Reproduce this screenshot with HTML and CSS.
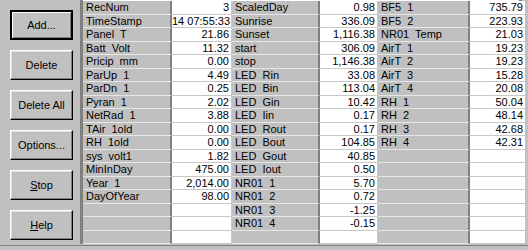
FILE: index.html
```html
<!DOCTYPE html>
<html lang="en">
<head>
    <meta charset="UTF-8">
    <title>Logger Values</title>
    <link rel="stylesheet" href="styles.css">
</head>
<body>
    <div class="window">
        <div class="side">
            <button class="btn default">Add...</button>
            <button class="btn">Delete</button>
            <button class="btn">Delete All</button>
            <button class="btn">Options...</button>
            <button class="btn"><u>S</u>top</button>
            <button class="btn"><u>H</u>elp</button>
        </div>
        <div class="grid">
            <div class="lbl">RecNum</div><div class="val">3</div><div class="lbl">ScaledDay</div><div class="val">0.98</div><div class="lbl">BF5  1</div><div class="val">735.79</div>
            <div class="lbl">TimeStamp</div><div class="val">14 07:55:33</div><div class="lbl">Sunrise</div><div class="val">336.09</div><div class="lbl">BF5  2</div><div class="val">223.93</div>
            <div class="lbl">Panel  T</div><div class="val">21.86</div><div class="lbl">Sunset</div><div class="val">1,116.38</div><div class="lbl">NR01  Temp</div><div class="val">21.03</div>
            <div class="lbl">Batt  Volt</div><div class="val">11.32</div><div class="lbl">start</div><div class="val">306.09</div><div class="lbl">AirT  1</div><div class="val">19.23</div>
            <div class="lbl">Pricip  mm</div><div class="val">0.00</div><div class="lbl">stop</div><div class="val">1,146.38</div><div class="lbl">AirT  2</div><div class="val">19.23</div>
            <div class="lbl">ParUp  1</div><div class="val">4.49</div><div class="lbl">LED  Rin</div><div class="val">33.08</div><div class="lbl">AirT  3</div><div class="val">15.28</div>
            <div class="lbl">ParDn  1</div><div class="val">0.25</div><div class="lbl">LED  Bin</div><div class="val">113.04</div><div class="lbl">AirT  4</div><div class="val">20.08</div>
            <div class="lbl">Pyran  1</div><div class="val">2.02</div><div class="lbl">LED  Gin</div><div class="val">10.42</div><div class="lbl">RH  1</div><div class="val">50.04</div>
            <div class="lbl">NetRad  1</div><div class="val">3.88</div><div class="lbl">LED  Iin</div><div class="val">0.17</div><div class="lbl">RH  2</div><div class="val">48.14</div>
            <div class="lbl">TAir  1old</div><div class="val">0.00</div><div class="lbl">LED  Rout</div><div class="val">0.17</div><div class="lbl">RH  3</div><div class="val">42.68</div>
            <div class="lbl">RH  1old</div><div class="val">0.00</div><div class="lbl">LED  Bout</div><div class="val">104.85</div><div class="lbl">RH  4</div><div class="val">42.31</div>
            <div class="lbl">sys  volt1</div><div class="val">1.82</div><div class="lbl">LED  Gout</div><div class="val">40.85</div><div class="lbl"></div><div class="val"></div>
            <div class="lbl">MinInDay</div><div class="val">475.00</div><div class="lbl">LED  Iout</div><div class="val">0.50</div><div class="lbl"></div><div class="val"></div>
            <div class="lbl">Year  1</div><div class="val">2,014.00</div><div class="lbl">NR01  1</div><div class="val">5.70</div><div class="lbl"></div><div class="val"></div>
            <div class="lbl">DayOfYear</div><div class="val">98.00</div><div class="lbl">NR01  2</div><div class="val">0.72</div><div class="lbl"></div><div class="val"></div>
            <div class="lbl"></div><div class="val"></div><div class="lbl">NR01  3</div><div class="val">-1.25</div><div class="lbl"></div><div class="val"></div>
            <div class="lbl"></div><div class="val"></div><div class="lbl">NR01  4</div><div class="val">-0.15</div><div class="lbl"></div><div class="val"></div>
            <div class="lbl"></div><div class="val"></div><div class="lbl"></div><div class="val"></div><div class="lbl"></div><div class="val"></div>
        </div>
    </div>
    <div class="bottom"></div>
</body>
</html>
```

FILE: styles.css
```css
body {
    margin: 0;
    background-color: #c0c0c0;
    font-family: "Liberation Sans", Arial, sans-serif;
    font-size: 11px;
    color: #000;
    width: 528px;
    height: 250px;
    overflow: hidden;
}
.window {
    display: flex;
    height: 245px;
}
.side {
    width: 80px;
    display: flex;
    flex-direction: column;
    gap: 10px;
    padding: 10px 0 0 10px;
    box-sizing: border-box;
}
.btn {
    width: 63px;
    height: 30px;
    padding: 0;
    font-family: inherit;
    font-size: 11px;
    color: #000;
    background-color: #c0c0c0;
    border: 1px solid;
    border-color: #fff #000 #000 #fff;
    box-shadow: inset -1px -1px 0 #808080, inset 1px 1px 0 #dfdfdf;
}
.btn.default {
    border: 2px solid #000;
    box-shadow: inset 1px 1px 0 #fff, inset -1px -1px 0 #808080;
}
.grid {
    display: grid;
    grid-template-columns: 89px 60px 88px 58px 92px 55px;
    grid-template-rows: repeat(18, 13.5px);
    border-left: 3px solid #808080;
    border-right: 3px solid #808080;
    padding-top: 1px;
    background-color: #fff;
    width: 442px;
    height: 244px;
    box-sizing: border-box;
}
.lbl, .val {
    box-sizing: border-box;
    white-space: pre;
    overflow: hidden;
    line-height: 12px;
    border-bottom: 1px solid #e6e6e6;
}
.lbl {
    background-color: #c0c0c0;
    padding-left: 3px;
    border-right: 2px solid #808080;
}
.val {
    background-color: #fff;
    text-align: right;
    padding-right: 2px;
    border-right: 1px solid #c8c8c8;
    border-bottom-color: #c8c8c8;
}
.grid .val:nth-child(6n) {
    border-right: none;
}
.bottom {
    height: 5px;
    border-top: 1px solid #808080;
}
```
